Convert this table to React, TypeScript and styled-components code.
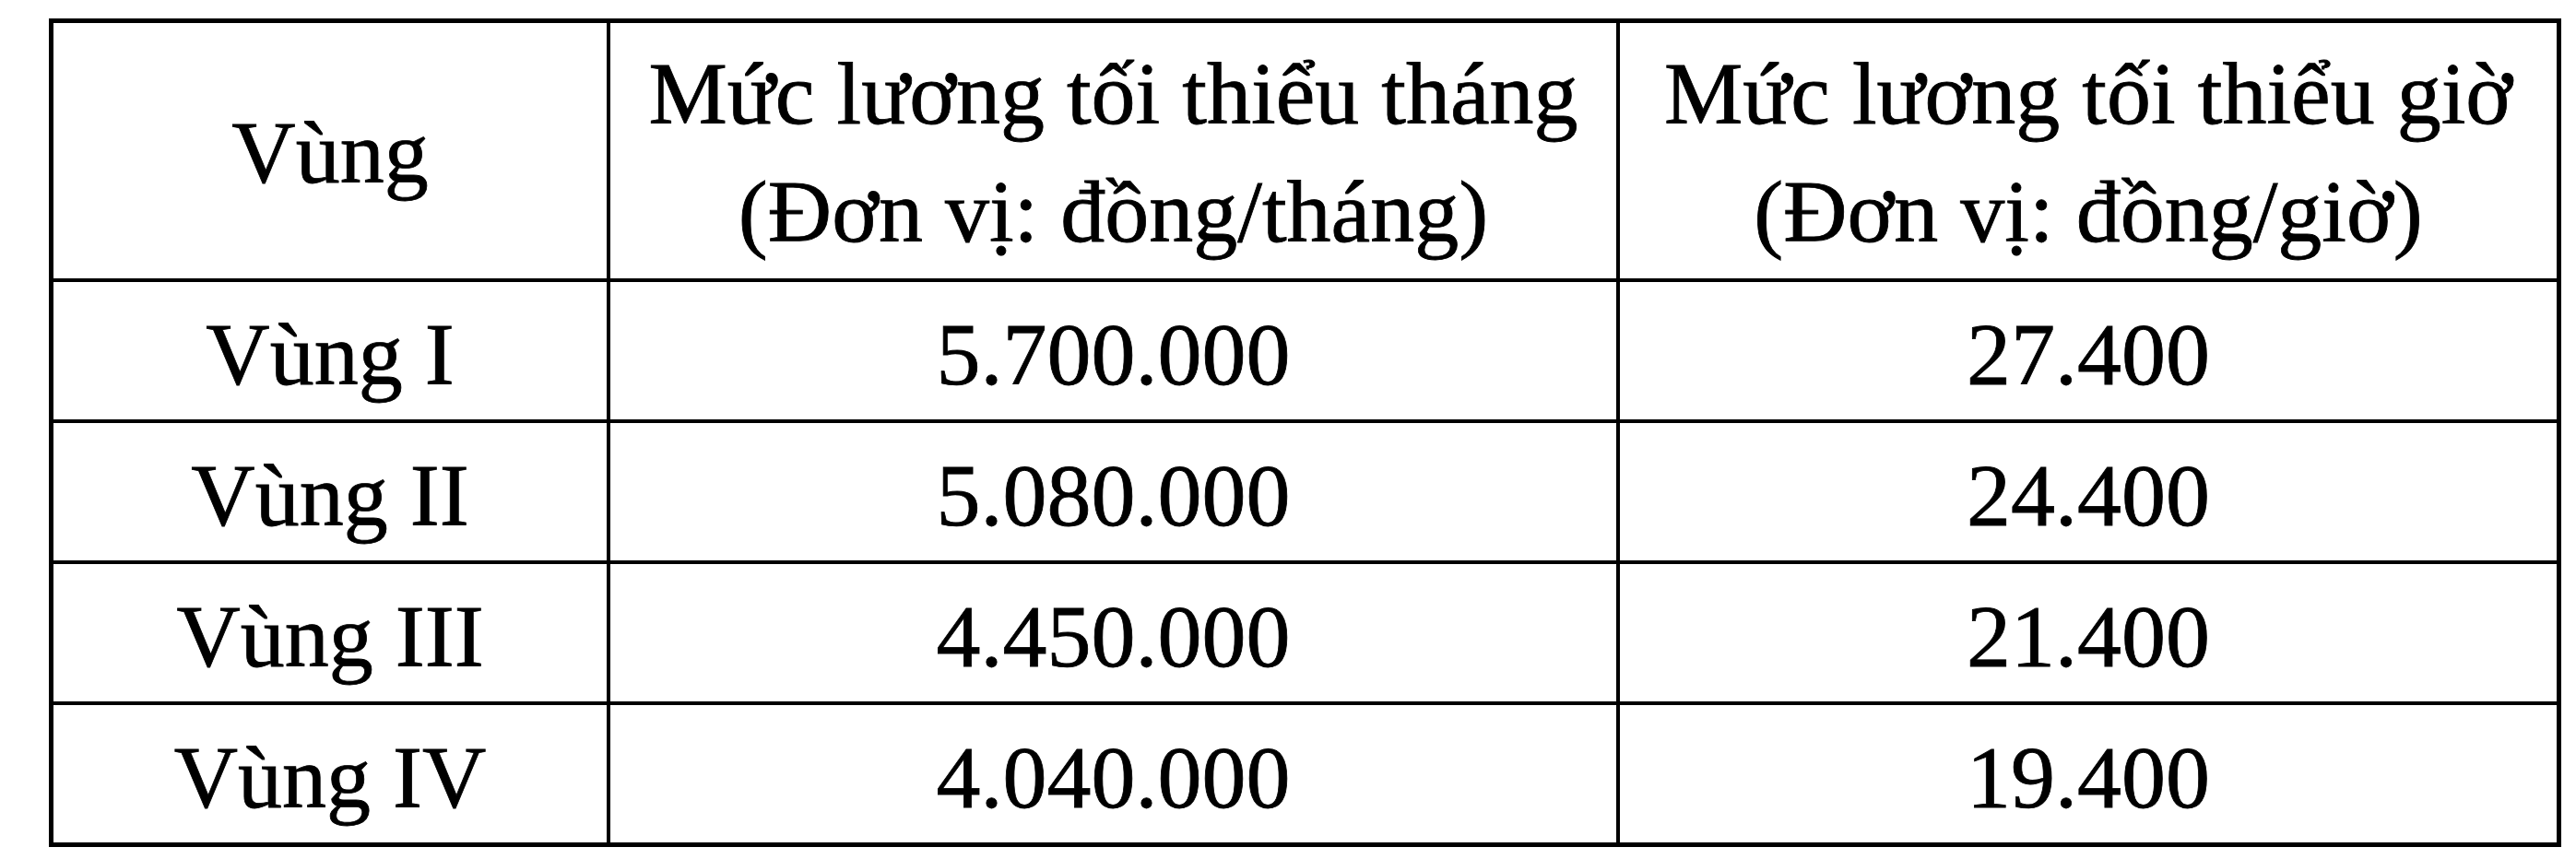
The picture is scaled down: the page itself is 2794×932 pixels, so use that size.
import React from 'react';
import styled, { createGlobalStyle } from 'styled-components';

const GlobalStyle = createGlobalStyle`
  html, body {
    margin: 0;
    padding: 0;
    background: #fff;
  }
`;

const rows = [
  { region: 'Vùng I', month: '5.700.000', hour: '27.400' },
  { region: 'Vùng II', month: '5.080.000', hour: '24.400' },
  { region: 'Vùng III', month: '4.450.000', hour: '21.400' },
  { region: 'Vùng IV', month: '4.040.000', hour: '19.400' },
];

const App = () => {
  return (
    <Page>
      <GlobalStyle />
      <Grid>
        <HeadCell>Vùng</HeadCell>
        <HeadCell>
          <Line>Mức lương tối thiểu tháng</Line>
          <Line>(Đơn vị: đồng/tháng)</Line>
        </HeadCell>
        <HeadCell>
          <Line>Mức lương tối thiểu giờ</Line>
          <Line>(Đơn vị: đồng/giờ)</Line>
        </HeadCell>
        {rows.map((row) => (
          <React.Fragment key={row.region}>
            <Cell>{row.region}</Cell>
            <Cell>{row.month}</Cell>
            <Cell>{row.hour}</Cell>
          </React.Fragment>
        ))}
      </Grid>
    </Page>
  );
};

export default App;

const Page = styled.div`
  width: 2794px;
  height: 932px;
  padding: 20px 0 0 53px;
  box-sizing: border-box;
  background: #fff;
`;

const Grid = styled.div`
  display: grid;
  grid-template-columns: 600px 1091px 1016px;
  grid-template-rows: 277px repeat(4, 149px);
  gap: 4px;
  width: 2725px;
  box-sizing: border-box;
  border: 5px solid #000;
  background: #000;
`;

const HeadCell = styled.div`
  display: flex;
  flex-direction: column;
  align-items: center;
  justify-content: center;
  padding-top: 4px;
  box-sizing: border-box;
  background: #fff;
  color: #000;
  font-family: 'Liberation Serif', 'Times New Roman', serif;
  font-size: 96px;
  line-height: 128px;
  white-space: nowrap;
  -webkit-text-stroke: 0.8px #000;
`;

const Line = styled.span`
  display: block;
`;

const Cell = styled.div`
  display: flex;
  align-items: center;
  justify-content: center;
  padding-top: 8px;
  box-sizing: border-box;
  background: #fff;
  color: #000;
  font-family: 'Liberation Serif', 'Times New Roman', serif;
  font-size: 96px;
  line-height: 1;
  white-space: nowrap;
  -webkit-text-stroke: 0.8px #000;
`;
